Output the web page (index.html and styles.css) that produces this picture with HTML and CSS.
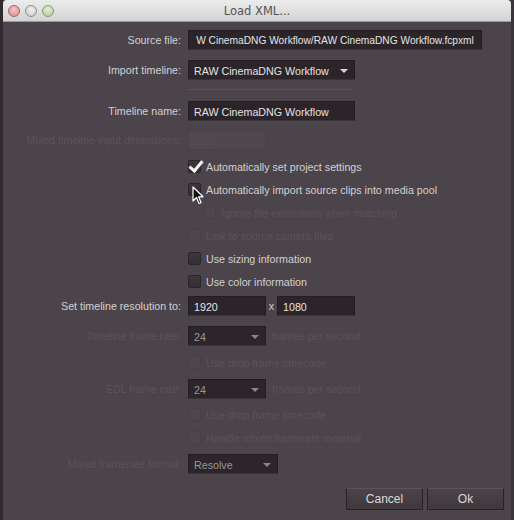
FILE: index.html
```html
<!DOCTYPE html>
<html lang="en">
<head>
    <meta charset="UTF-8">
    <title>Load XML...</title>
    <link rel="stylesheet" href="styles.css">
</head>
<body>
    <div class="win">
        <div class="titlebar">
            <div class="lights">
                <span class="light red"></span>
                <span class="light grey"></span>
                <span class="light green"></span>
            </div>
            <div class="title">Load XML...</div>
        </div>

        <div class="form">
            <div class="row">
                <label class="lbl">Source file:</label>
                <div class="box wide"><span>W CinemaDNG Workflow/RAW CinemaDNG Workflow.fcpxml</span></div>
            </div>
            <div class="row gap8">
                <label class="lbl">Import timeline:</label>
                <div class="box sel mid">RAW CinemaDNG Workflow<i class="arrow"></i></div>
            </div>
            <div class="sep"></div>
            <div class="row gap10">
                <label class="lbl">Timeline name:</label>
                <div class="box mid">RAW CinemaDNG Workflow</div>
            </div>
            <div class="row gap7 off">
                <label class="lbl">Mixed timeline input dimensions:</label>
                <div class="box small ghost">: : :</div>
            </div>

            <div class="check gap4"><span class="cb on"></span>Automatically set project settings</div>
            <div class="check"><span class="cb"></span>Automatically import source clips into media pool</div>
            <div class="check sub off"><span class="cb"></span>Ignore file extensions when matching</div>
            <div class="check off"><span class="cb"></span>Link to source camera files</div>
            <div class="check"><span class="cb"></span>Use sizing information</div>
            <div class="check"><span class="cb"></span>Use color information</div>

            <div class="row gap2">
                <label class="lbl">Set timeline resolution to:</label>
                <div class="res">
                    <div class="box small">1920</div>
                    <span class="x">x</span>
                    <div class="box small">1080</div>
                </div>
            </div>
            <div class="row gap8 off">
                <label class="lbl">Timeline frame rate:</label>
                <div class="box sel small dim">24<i class="arrow"></i></div>
                <span class="after">frames per second</span>
            </div>
            <div class="check gap4 off"><span class="cb"></span>Use drop frame timecode</div>
            <div class="row gap4 off">
                <label class="lbl">EDL frame rate:</label>
                <div class="box sel small dim">24<i class="arrow"></i></div>
                <span class="after">frames per second</span>
            </div>
            <div class="check gap3 off"><span class="cb"></span>Use drop frame timecode</div>
            <div class="check off"><span class="cb"></span>Handle mixed framerate material</div>
            <div class="row gap4 off">
                <label class="lbl">Mixed framerate format:</label>
                <div class="box sel fmt dim">Resolve<i class="arrow"></i></div>
            </div>

            <div class="buttons">
                <a href="#" class="btn">Cancel</a>
                <a href="#" class="btn">Ok</a>
            </div>
        </div>

        <svg class="cursor" width="12" height="19" viewBox="0 0 12 19">
            <path d="M1 1 L1 15 L4.5 11.5 L7 17.5 L9 16.6 L6.6 10.8 L11 10.8 Z" fill="#111" stroke="#fff" stroke-width="1.2" stroke-linejoin="round"/>
        </svg>
    </div>
</body>
</html>
```

FILE: styles.css
```css
* {padding: 0; margin: 0; box-sizing: border-box;}
html, body {width: 514px; height: 520px; overflow: hidden; background: #2a2629;}
body {font-family: "Liberation Sans", Arial, sans-serif; font-size: 10.7px; color: #d2d0d2;}

.win {position: relative; width: 514px; height: 520px; background: #4b444a;
    border-left: 3px solid #2e2a2d; border-right: 3px solid #3a3539;}

.titlebar {position: relative; height: 22px; background: linear-gradient(#ececec, #d3d3d3);
    border-bottom: 1px solid #9a9a9a; border-radius: 4px 4px 0 0;}
.lights {position: absolute; left: 5px; top: 5px; display: flex; gap: 5px;}
.light {width: 12px; height: 12px; border-radius: 50%; border: 1px solid #8e8e8e;}
.light.red {background: radial-gradient(circle at 50% 35%, #f4c6c6, #d88a8c); border-color: #a06668;}
.light.grey {background: radial-gradient(circle at 50% 35%, #f2f2f2, #c4c4c4);}
.light.green {background: radial-gradient(circle at 50% 35%, #e2eed2, #b2c79a); border-color: #889c74;}
.title {text-align: center; line-height: 22px; font-family: "DejaVu Sans", sans-serif; font-size: 11.5px; color: #555;}

.form {display: flex; flex-direction: column; padding-top: 7px;}

.row {display: flex; align-items: center; height: 22px;}
.lbl {width: 178px; text-align: right; flex: none; margin-right: 7px;}

.gap2 {margin-top: 2px;}
.gap3 {margin-top: 3px;}
.gap4 {margin-top: 4px;}
.gap7 {margin-top: 7px;}
.gap8 {margin-top: 8px;}
.gap10 {margin-top: 10px;}

.box {position: relative; height: 20px; line-height: 20px; padding: 0 5px; background: #2b2529;
    border: 1px solid #221e21; border-bottom-color: #3a3439; color: #e4e2e4; white-space: nowrap; overflow: hidden;}
.box.wide {width: 294px; padding: 0 2px; display: flex; justify-content: center;}
.box.wide span {flex: none; font-size: 10.2px;}
.box.mid {width: 167px;}
.box.small {width: 78px;}
.box.fmt {width: 90px;}
.box.ghost {background: #4f484e; border-color: #48424a; color: #655e65; letter-spacing: 2px;}
.box.dim {background: #2c262a; color: #9a959a;}

.arrow {position: absolute; right: 6px; top: 8px; width: 0; height: 0;
    border-left: 4px solid transparent; border-right: 4px solid transparent; border-top: 4px solid #d8d6d8;}
.dim .arrow {border-top-color: #8a858a;}

.sep {margin: 8px 0 0 185px; width: 164px; height: 1px; background: #5a535a;}

.check {display: flex; align-items: center; height: 23px; padding-left: 185px;}
.check.sub {padding-left: 200px;}
.cb {position: relative; width: 13px; height: 13px; margin-right: 5px; border-radius: 2px;
    background: linear-gradient(#3d373c, #342f33); border: 1px solid #2a2528; flex: none;}
.cb.on::after {content: ""; position: absolute; left: 3px; top: -3px; width: 5px; height: 11px;
    border: solid #f4f4f4; border-width: 0 3px 3px 0; transform: rotate(40deg);}

.off {color: #5a535a;}
.off .cb {background: #4d464c; border-color: #474046;}

.res {display: flex; align-items: center;}
.res .x {width: 11px; text-align: center;}
.after {margin-left: 6px;}

.buttons {display: flex; justify-content: flex-end; gap: 4px; margin-top: 13px; padding-right: 7px;}
.btn {display: block; width: 77px; height: 22px; line-height: 20px; text-align: center; color: #dcdadc; font-size: 12px;
    text-decoration: none; background: linear-gradient(#4a4449, #3f393e); border: 1px solid #262226; border-top-color: #5a5359;}

.cursor {position: absolute; left: 189px; top: 186px;}
```
